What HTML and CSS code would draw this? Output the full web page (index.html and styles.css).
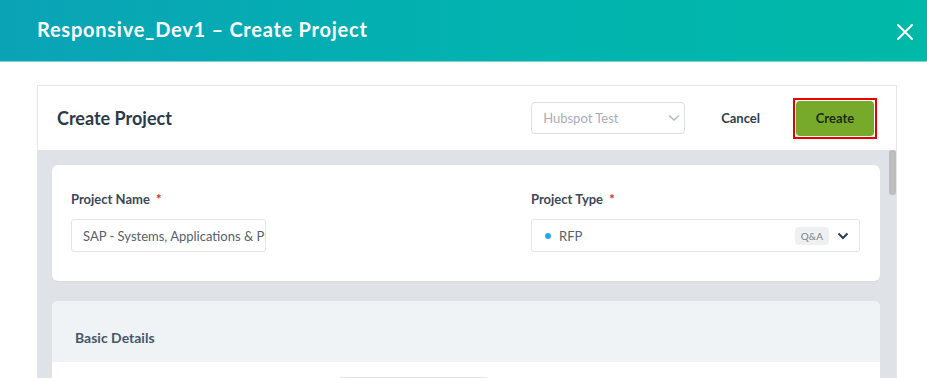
FILE: index.html
```html
<!DOCTYPE html>
<html>
<head>
<meta charset="utf-8">
<link rel="stylesheet" href="styles.css">
</head>
<body>
<header class="topbar">
  <h1 class="topbar-title">Responsive_Dev1 – Create Project</h1>
  <button class="close-btn" aria-label="Close">
    <svg width="16" height="16" viewBox="0 0 16 16"><path d="M1 1L15 15M15 1L1 15" stroke="#fff" stroke-width="2" stroke-linecap="round"/></svg>
  </button>
</header>
<main class="main">
  <section class="panel">
    <div class="panel-head">
      <h2 class="panel-title">Create Project</h2>
      <div class="actions">
        <div class="picker">
          <span class="picker-text">Hubspot Test</span>
          <svg width="12" height="8" viewBox="0 0 12 8"><path d="M1 1.5L6 6L11 1.5" fill="none" stroke="#b3b8be" stroke-width="1.4"/></svg>
        </div>
        <span class="cancel">Cancel</span>
        <span class="create-frame"><button class="create">Create</button></span>
      </div>
    </div>
    <div class="panel-body">
      <div class="scroll-thumb"></div>
      <div class="card">
        <div class="field field-name">
          <label class="label">Project Name <span class="req">*</span></label>
          <div class="input input-name">SAP - Systems, Applications &amp; Products</div>
        </div>
        <div class="field">
          <label class="label">Project Type <span class="req">*</span></label>
          <div class="input input-type">
            <span class="dot"></span>
            <span class="type-text">RFP</span>
            <span class="badge">Q&amp;A</span>
            <svg class="chev" width="12" height="8" viewBox="0 0 12 8"><path d="M1.5 1.5L6 6L10.5 1.5" fill="none" stroke="#2d3e50" stroke-width="2"/></svg>
          </div>
        </div>
      </div>
      <div class="card card-details">
        <div class="details-head">Basic Details</div>
        <div class="details-body">
          <div class="details-input"></div>
        </div>
      </div>
    </div>
  </section>
</main>
</body>
</html>
```
FILE: styles.css
```css
* { box-sizing: border-box; }
html, body { margin: 0; padding: 0; height: 100%; overflow: hidden; }
body {
  background: #ffffff;
  font-family: Lato, "Open Sans", sans-serif;
  color: #2d3e50;
}
.topbar {
  height: 62px;
  display: flex;
  align-items: center;
  justify-content: space-between;
  padding: 0 14px 3px 37px;
  background: linear-gradient(90deg, #0aa3b6 0%, #02b2b0 50%, #00b9a8 100%);
  border-bottom: 1px solid #7ad6d2;
}
.topbar-title {
  margin: 0;
  font-size: 20px;
  font-weight: 700;
  color: #ffffff;
  letter-spacing: 0.75px;
}
.close-btn {
  background: none;
  border: 0;
  padding: 0;
  width: 16px;
  height: 16px;
  display: flex;
  margin-top: 5px;
}
.main {
  padding: 23px 30px 0 37px;
}
.panel {
  border: 1px solid #e4e7ea;
  border-bottom: 0;
  height: 293px;
  overflow: hidden;
}
.panel-head {
  height: 64px;
  display: flex;
  align-items: center;
  justify-content: space-between;
  padding: 0 19px 0 19px;
  background: #fff;
}
.panel-title {
  margin: 0;
  font-size: 18px;
  font-weight: 700;
  color: #2b3a4b;
}
.actions {
  display: flex;
  align-items: center;
  gap: 33px;
}
.picker {
  width: 154px;
  height: 32px;
  border: 1px solid #dde1e5;
  border-radius: 4px;
  display: flex;
  align-items: center;
  justify-content: space-between;
  padding: 0 4px 0 11px;
  margin-right: 3px;
}
.picker-text {
  font-size: 13px;
  color: #a8adb4;
}
.cancel {
  font-size: 13px;
  font-weight: 700;
  color: #2d3e50;
}
.create-frame {
  display: flex;
  border: 2px solid #e60000;
  padding: 1px;
}
.create {
  width: 78px;
  height: 35px;
  border: 0;
  border-radius: 4px;
  background: #77aa2a;
  color: #1c2a12;
  font-family: Lato, sans-serif;
  font-size: 13px;
  font-weight: 700;
  padding: 0;
}
.panel-body {
  position: relative;
  background: #dfe2e7;
  height: 229px;
  overflow: hidden;
  padding: 15px 16px 0 14px;
}
.scroll-thumb {
  position: absolute;
  top: 0;
  right: 0;
  width: 7px;
  height: 45px;
  background: #bdbdbd;
  border-radius: 3px;
}
.card {
  background: #ffffff;
  border-radius: 6px;
  height: 116px;
  padding: 27px 20px 0 19px;
  display: grid;
  grid-template-columns: 440px 1fr;
  column-gap: 20px;
  box-shadow: 0 1px 1px rgba(0,0,0,0.04);
}
.field { display: flex; flex-direction: column; }
.label {
  font-size: 13px;
  font-weight: 700;
  color: #3b4858;
  height: 14px;
  line-height: 14px;
  margin-bottom: 13px;
}
.req { color: #e02424; margin-left: 3px; }
.input {
  height: 33px;
  border: 1px solid #e2e5e8;
  border-radius: 3px;
  display: flex;
  align-items: center;
  font-size: 13px;
  color: #556070;
}
.input-name {
  width: 195px;
  padding-left: 11px;
  white-space: nowrap;
  overflow: hidden;
}
.input-type {
  padding: 0 10px 0 13px;
}
.dot {
  width: 6px;
  height: 6px;
  border-radius: 50%;
  background: #2aa7f0;
  margin-right: 8px;
}
.type-text { flex: 1; }
.badge {
  background: #eef0f2;
  border-radius: 4px;
  font-size: 10px;
  color: #7a8088;
  padding: 3px 6px;
  margin-right: 8px;
}
.chev { display: block; }
.card-details {
  display: block;
  margin-top: 20px;
  padding: 0;
  height: 100px;
  border-radius: 6px 6px 0 0;
  overflow: hidden;
}
.details-head {
  height: 61px;
  background: #eff3f6;
  padding: 28px 0 0 23px;
  font-size: 14px;
  font-weight: 700;
  color: #485669;
}
.details-body {
  padding: 15px 0 0 286px;
}
.details-input {
  width: 150px;
  height: 30px;
  border: 1px solid #e2e5e8;
  border-radius: 3px;
}
```
